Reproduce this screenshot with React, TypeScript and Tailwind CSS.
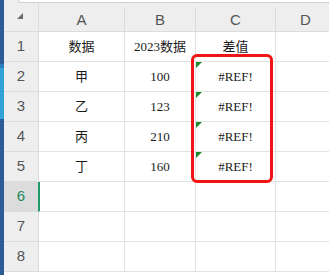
import React from "react";

const cols = ["A", "B", "C", "D"];
const rows: (string | null)[][] = [
  ["数据", "2023数据", "差值"],
  ["甲", "100", "#REF!"],
  ["乙", "123", "#REF!"],
  ["丙", "210", "#REF!"],
  ["丁", "160", "#REF!"],
  ["", "", ""],
  ["", "", ""],
  ["", "", ""],
];

const serif = { fontFamily: '"Liberation Serif", "Noto Sans CJK SC", serif' };

export default function App() {
  return (
    <div className="relative flex w-[329px] h-[275px] overflow-hidden bg-white">
      {/* left blue strip */}
      <div className="w-[4px] flex flex-col shrink-0">
        <div className="h-[64px] bg-[#2d5b96]" />
        <div className="h-[4px] bg-[#2b7cbf]" />
        <div className="h-[51px] bg-[#32a2d6]" />
        <div className="flex-1 bg-[#2d5b96]" />
      </div>
      <div className="flex-1 flex flex-col" style={{ fontFamily: '"Liberation Sans", Arial, sans-serif' }}>
        {/* top strip */}
        <div className="h-[3px] flex bg-[#eeeeee]">
          <div className="w-[14px]" />
          <div className="flex-1 bg-white border-b border-l border-[#cfcfcf] rounded-bl-[4px]" />
        </div>
        <div className="grid grid-cols-[35px_86px_71px_80px_60px]">
          {/* header row */}
          <div className="h-[29px] bg-[#eeeeee] border-b border-r border-[#dcdcdc] flex items-center justify-center">
            <div className="w-0 h-0 border-b-[6px] border-b-[#6b6b6b] border-l-[6px] border-l-transparent translate-y-[-1px] translate-x-[-1px]" />
          </div>
          {cols.map((c) => (
            <div key={c} className="h-[29px] bg-[#eeeeee] border-b border-[#dcdcdc] flex items-end">
              <div className="h-[24px] w-full border-r border-[#dcdcdc] flex items-start justify-center text-[15px] text-[#555] leading-[15px] pt-[5px]">
                {c}
              </div>
            </div>
          ))}
          {rows.map((r, i) => {
            const sel = i === 5;
            return (
              <React.Fragment key={i}>
                <div
                  className={`h-[30px] border-b border-r border-[#dcdcdc] flex items-center justify-center text-[15px] ${
                    sel ? "bg-[#dcdcdc] text-[#1d8a5c]" : "bg-[#eeeeee] text-[#555]"
                  }`}
                >
                  {i + 1}
                </div>
                <div
                  className={`h-[30px] border-b border-r border-[#e2e2e2] flex items-center justify-center text-[13px] text-[#1a1a1a] ${
                    sel ? "border-l-[2px] border-l-[#1e9a6a] -ml-[1px]" : ""
                  }`}
                  style={serif}
                >
                  {r[0]}
                </div>
                <div className="h-[30px] border-b border-r border-[#e2e2e2] flex items-center justify-center text-[13px] text-[#1a1a1a]" style={serif}>
                  {r[1]}
                </div>
                <div className="relative h-[30px] border-b border-r border-[#e2e2e2] flex items-center justify-center text-[13px] text-[#1a1a1a]" style={serif}>
                  {r[2] === "#REF!" && (
                    <div className="absolute left-0 top-0 w-0 h-0 border-t-[6px] border-t-[#1d8a2c] border-r-[6px] border-r-transparent" />
                  )}
                  {r[2]}
                </div>
                <div className="h-[30px] border-b border-[#e2e2e2]" />
              </React.Fragment>
            );
          })}
        </div>
      </div>
      {/* red highlight box */}
      <div className="absolute left-[191px] top-[54px] w-[82px] h-[129px] border-[3px] border-[#f01414] rounded-[6px]" />
    </div>
  );
}
